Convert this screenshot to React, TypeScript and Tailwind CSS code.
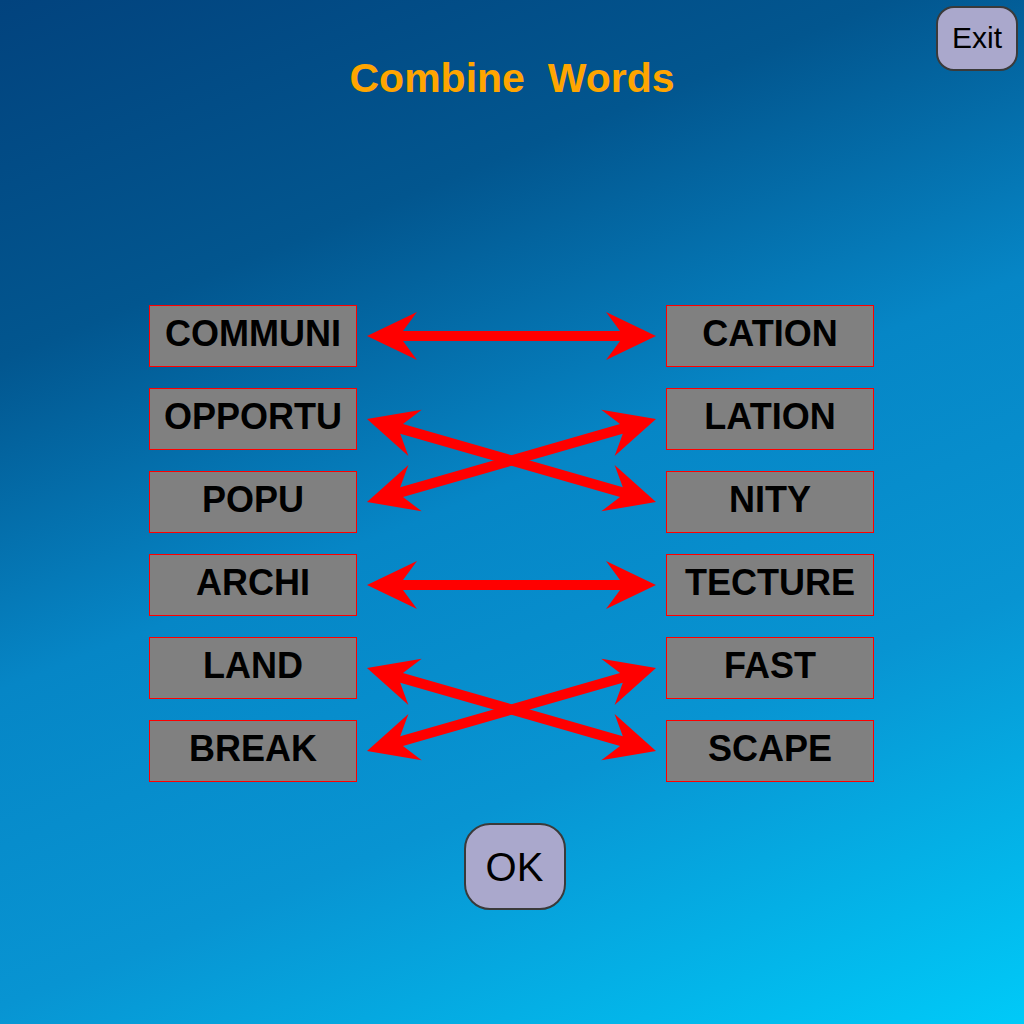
import React from "react";

const left = ["COMMUNI", "OPPORTU", "POPU", "ARCHI", "LAND", "BREAK"];
const right = ["CATION", "LATION", "NITY", "TECTURE", "FAST", "SCAPE"];

// row centres inside the middle column
const cy = [31, 114, 197, 280, 363, 446];
const x1 = 10;
const x2 = 299;

function arrowPoints(ax: number, ay: number, bx: number, by: number) {
  const len = Math.hypot(bx - ax, by - ay);
  const ux = (bx - ax) / len;
  const uy = (by - ay) / len;
  const nx = -uy;
  const ny = ux;
  const L = 50, W = 24, d = 36, t = 5;
  const p = (x: number, y: number) => `${x.toFixed(1)},${y.toFixed(1)}`;
  return [
    p(ax, ay),
    p(ax + ux * L + nx * W, ay + uy * L + ny * W),
    p(ax + ux * d + nx * t, ay + uy * d + ny * t),
    p(bx - ux * d + nx * t, by - uy * d + ny * t),
    p(bx - ux * L + nx * W, by - uy * L + ny * W),
    p(bx, by),
    p(bx - ux * L - nx * W, by - uy * L - ny * W),
    p(bx - ux * d - nx * t, by - uy * d - ny * t),
    p(ax + ux * d - nx * t, ay + uy * d - ny * t),
    p(ax + ux * L - nx * W, ay + uy * L - ny * W),
  ].join(" ");
}

const links: [number, number][] = [
  [0, 0],
  [1, 2],
  [2, 1],
  [3, 3],
  [4, 5],
  [5, 4],
];

function WordBox({ text }: { text: string }) {
  return (
    <div className="h-[62px] w-[208px] bg-[#808080] border border-[#ff0000] flex items-center justify-center pb-[4px] text-[36px] font-bold text-black">
      {text}
    </div>
  );
}

export default function App() {
  return (
    <div
      className="relative w-full h-[1024px] overflow-hidden bg-[linear-gradient(158deg,#02437e_0%,#02568f_25%,#0686c6_48%,#0894d2_70%,#00caf8_100%)]"
      style={{ fontFamily: '"Liberation Sans", Arial, sans-serif' }}
    >
      <button className="absolute top-[6px] right-[6px] w-[82px] h-[65px] rounded-[18px] bg-[#aaa8cc] border-2 border-[#3a3a3a] text-[30px] text-black flex items-center justify-center pb-[2px]">
        Exit
      </button>

      <h1 className="pt-[54px] text-center text-[41px] leading-[48px] font-bold text-[#ffa500] whitespace-pre">
        {"Combine  Words"}
      </h1>

      <div className="mt-[203px] flex justify-center">
        <div className="grid grid-cols-[208px_309px_208px] ml-[-1px]">
          <div className="flex flex-col gap-[21px]">
            {left.map((w) => (
              <WordBox key={w} text={w} />
            ))}
          </div>
          <svg width="309" height="477" viewBox="0 0 309 477">
            {links.map(([a, b], i) => (
              <polygon key={i} points={arrowPoints(x1, cy[a], x2, cy[b])} fill="#ff0000" />
            ))}
          </svg>
          <div className="flex flex-col gap-[21px]">
            {right.map((w) => (
              <WordBox key={w} text={w} />
            ))}
          </div>
        </div>
      </div>

      <div className="mt-[41px] flex justify-center">
        <button className="w-[102px] h-[87px] rounded-[26px] bg-[#aaa8cc] border-2 border-[#3a3a3a] text-[40px] text-black flex items-center justify-center ml-[5px]">
          OK
        </button>
      </div>
    </div>
  );
}
